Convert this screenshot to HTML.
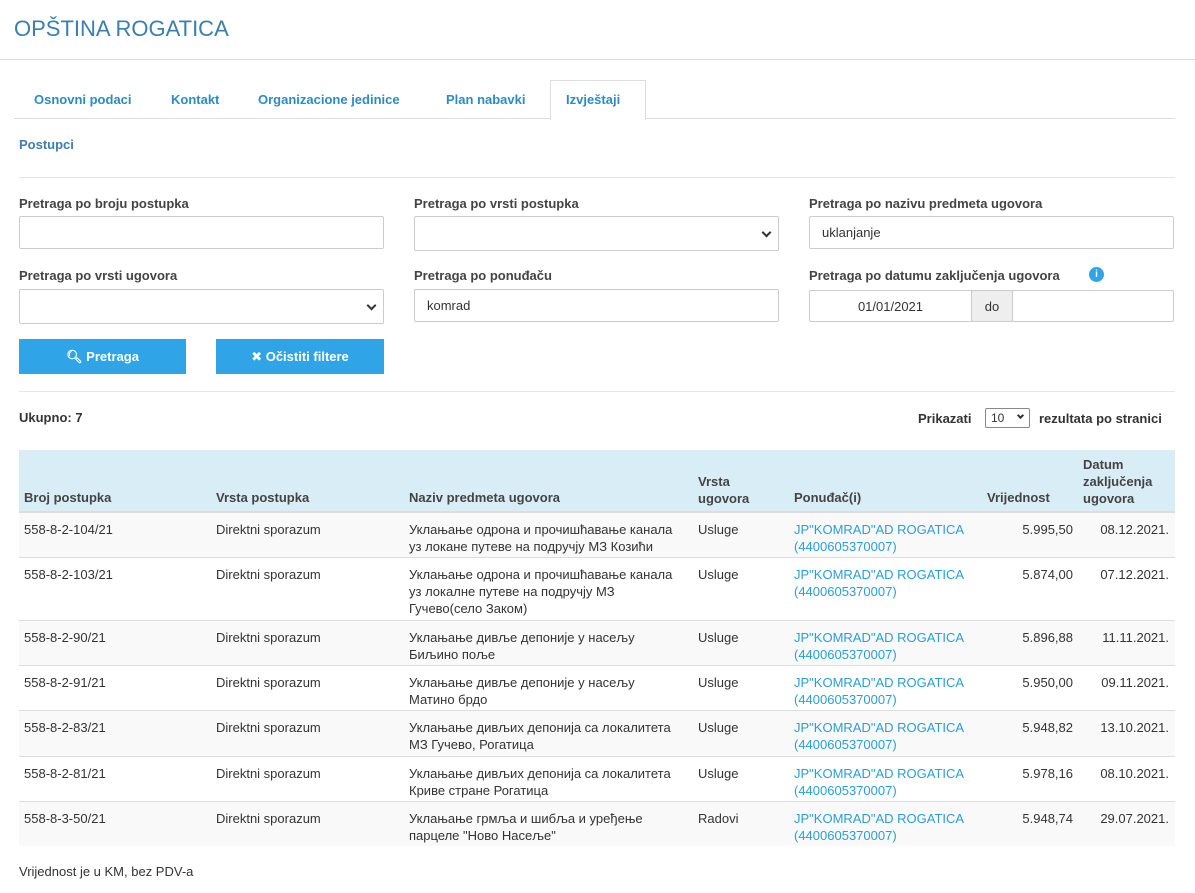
<!DOCTYPE html>
<html><head><meta charset="utf-8"><style>
*{box-sizing:border-box;margin:0;padding:0}
body{width:1195px;height:893px;background:#fff;font-family:"Liberation Sans","DejaVu Sans",sans-serif;font-size:13px;color:#333;position:relative;overflow:hidden}
.a{position:absolute;white-space:nowrap}
.b{font-weight:bold}
.lbl{font-weight:bold;color:#444;font-size:13px}
.inp{position:absolute;border:1px solid #ccc;border-radius:2px;background:#fff;height:33px;padding:0 12px;line-height:31px;font-size:13px;color:#333}
.chev{position:absolute;right:8px;top:12px;width:7px;height:7px;border-right:2px solid #333;border-bottom:2px solid #333;transform:rotate(45deg)}
.btn{position:absolute;background:#2fa4e7;color:#fff;font-weight:bold;height:35px;line-height:35px;text-align:center;font-size:13px}
.tab{position:absolute;top:92px;color:#2a8cc4;font-weight:bold;font-size:13px}
.row{position:absolute;left:19px;width:1156px;border-top:1px solid #ddd}
.c{position:absolute;top:8px;line-height:17px;font-size:13px;white-space:nowrap}
.lnk{color:#2a9fd6}
.r{text-align:right}
</style></head><body>
<div class="a" style="left:14px;top:16px;font-size:22px;color:#3a7fad">OPŠTINA ROGATICA</div>
<div class="a" style="left:0;top:59px;width:1195px;border-top:1px solid #ddd"></div>
<div class="a" style="left:14px;top:118px;width:1161px;border-top:1px solid #ddd"></div>
<div class="a" style="left:550px;top:80px;width:96px;height:40px;border:1px solid #ddd;border-bottom:none;background:#fff"></div>
<div class="tab" style="left:34px">Osnovni podaci</div>
<div class="tab" style="left:171px">Kontakt</div>
<div class="tab" style="left:258px">Organizacione jedinice</div>
<div class="tab" style="left:446px">Plan nabavki</div>
<div class="tab" style="left:566px">Izvještaji</div>
<div class="a b" style="left:19px;top:137px;color:#3a7fad">Postupci</div>
<div class="a" style="left:19px;top:177px;width:1156px;border-top:1px solid #e5e5e5"></div>

<div class="a lbl" style="left:19px;top:196px">Pretraga po broju postupka</div>
<div class="inp" style="left:19px;top:216px;width:365px"></div>
<div class="a lbl" style="left:414px;top:196px">Pretraga po vrsti postupka</div>
<div class="inp" style="left:414px;top:216px;width:365px;height:35px"><span class="chev"></span></div>
<div class="a lbl" style="left:809px;top:196px">Pretraga po nazivu predmeta ugovora</div>
<div class="inp" style="left:809px;top:216px;width:365px">uklanjanje</div>

<div class="a lbl" style="left:19px;top:268px">Pretraga po vrsti ugovora</div>
<div class="inp" style="left:19px;top:289px;width:365px;height:35px"><span class="chev"></span></div>
<div class="a lbl" style="left:414px;top:268px">Pretraga po ponuđaču</div>
<div class="inp" style="left:414px;top:289px;width:365px">komrad</div>
<div class="a lbl" style="left:809px;top:268px">Pretraga po datumu zaključenja ugovora</div>
<div class="a" style="left:1089px;top:267px;width:15px;height:15px;border-radius:50%;background:#2fa4e7;color:#fff;font-size:10px;font-weight:bold;text-align:center;line-height:15px">i</div>
<div class="inp" style="left:809px;top:290px;width:163px;height:32px;text-align:center;border-radius:2px 0 0 2px">01/01/2021</div>
<div class="inp" style="left:971px;top:290px;width:42px;height:32px;background:#eee;text-align:center;padding:0">do</div>
<div class="inp" style="left:1012px;top:290px;width:162px;height:32px"></div>

<div class="btn" style="left:19px;top:339px;width:167px">&#128269;&#xFE0E; Pretraga</div>
<div class="btn" style="left:216px;top:339px;width:168px">✖ Očistiti filtere</div>
<div class="a" style="left:19px;top:391px;width:1156px;border-top:1px solid #e5e5e5"></div>

<div class="a b" style="left:19px;top:410px">Ukupno: 7</div>
<div class="a b" style="left:918px;top:411px">Prikazati</div>
<div class="a" style="left:985px;top:408px;width:45px;height:20px;border:1px solid #888;border-radius:2px;font-size:12px;line-height:18px;padding-left:5px">10<span style="position:absolute;right:6px;top:4px;width:5px;height:5px;border-right:2px solid #333;border-bottom:2px solid #333;transform:rotate(45deg)"></span></div>
<div class="a b" style="left:1039px;top:411px">rezultata po stranici</div>

<div class="a" style="left:19px;top:450px;width:1156px;height:63px;background:#d9edf7;border-bottom:2px solid #ddd"></div>
<div class="a b" style="left:24px;top:490px;color:#444">Broj postupka</div>
<div class="a b" style="left:216px;top:490px;color:#444">Vrsta postupka</div>
<div class="a b" style="left:409px;top:490px;color:#444">Naziv predmeta ugovora</div>
<div class="a b" style="left:698px;top:473px;line-height:17px;color:#444">Vrsta<br>ugovora</div>
<div class="a b" style="left:794px;top:490px;color:#444">Ponuđač(i)</div>
<div class="a b" style="left:987px;top:490px;color:#444">Vrijednost</div>
<div class="a b" style="left:1083px;top:456px;line-height:17px;color:#444">Datum<br>zaključenja<br>ugovora</div>

<div class="row" style="top:512px;height:45px;background:#f9f9f9"><div class="c" style="left:5px">558-8-2-104/21</div><div class="c" style="left:197px">Direktni sporazum</div><div class="c" style="left:390px">Уклањање одрона и прочишћавање канала<br>уз локане путеве на подручју МЗ Козићи</div><div class="c" style="left:679px">Usluge</div><div class="c lnk" style="left:775px">JP"KOMRAD"AD ROGATICA<br>(4400605370007)</div><div class="c r" style="right:102px">5.995,50</div><div class="c r" style="right:6px">08.12.2021.</div></div>
<div class="row" style="top:557px;height:63px"><div class="c" style="left:5px">558-8-2-103/21</div><div class="c" style="left:197px">Direktni sporazum</div><div class="c" style="left:390px">Уклањање одрона и прочишћавање канала<br>уз локалне путеве на подручју МЗ<br>Гучево(село Заком)</div><div class="c" style="left:679px">Usluge</div><div class="c lnk" style="left:775px">JP"KOMRAD"AD ROGATICA<br>(4400605370007)</div><div class="c r" style="right:102px">5.874,00</div><div class="c r" style="right:6px">07.12.2021.</div></div>
<div class="row" style="top:620px;height:45px;background:#f9f9f9"><div class="c" style="left:5px">558-8-2-90/21</div><div class="c" style="left:197px">Direktni sporazum</div><div class="c" style="left:390px">Уклањање дивље депоније у насељу<br>Биљино поље</div><div class="c" style="left:679px">Usluge</div><div class="c lnk" style="left:775px">JP"KOMRAD"AD ROGATICA<br>(4400605370007)</div><div class="c r" style="right:102px">5.896,88</div><div class="c r" style="right:6px">11.11.2021.</div></div>
<div class="row" style="top:665px;height:45px"><div class="c" style="left:5px">558-8-2-91/21</div><div class="c" style="left:197px">Direktni sporazum</div><div class="c" style="left:390px">Уклањање дивље депоније у насељу<br>Матино брдо</div><div class="c" style="left:679px">Usluge</div><div class="c lnk" style="left:775px">JP"KOMRAD"AD ROGATICA<br>(4400605370007)</div><div class="c r" style="right:102px">5.950,00</div><div class="c r" style="right:6px">09.11.2021.</div></div>
<div class="row" style="top:710px;height:46px;background:#f9f9f9"><div class="c" style="left:5px">558-8-2-83/21</div><div class="c" style="left:197px">Direktni sporazum</div><div class="c" style="left:390px">Уклањање дивљих депонија са локалитета<br>МЗ Гучево, Рогатица</div><div class="c" style="left:679px">Usluge</div><div class="c lnk" style="left:775px">JP"KOMRAD"AD ROGATICA<br>(4400605370007)</div><div class="c r" style="right:102px">5.948,82</div><div class="c r" style="right:6px">13.10.2021.</div></div>
<div class="row" style="top:756px;height:45px"><div class="c" style="left:5px">558-8-2-81/21</div><div class="c" style="left:197px">Direktni sporazum</div><div class="c" style="left:390px">Уклањање дивљих депонија са локалитета<br>Криве стране Рогатица</div><div class="c" style="left:679px">Usluge</div><div class="c lnk" style="left:775px">JP"KOMRAD"AD ROGATICA<br>(4400605370007)</div><div class="c r" style="right:102px">5.978,16</div><div class="c r" style="right:6px">08.10.2021.</div></div>
<div class="row" style="top:801px;height:45px;background:#f9f9f9"><div class="c" style="left:5px">558-8-3-50/21</div><div class="c" style="left:197px">Direktni sporazum</div><div class="c" style="left:390px">Уклањање грмља и шибља и уређење<br>парцеле "Ново Насеље"</div><div class="c" style="left:679px">Radovi</div><div class="c lnk" style="left:775px">JP"KOMRAD"AD ROGATICA<br>(4400605370007)</div><div class="c r" style="right:102px">5.948,74</div><div class="c r" style="right:6px">29.07.2021.</div></div>

<div class="a" style="left:19px;top:864px">Vrijednost je u KM, bez PDV-a</div>
</body></html>
